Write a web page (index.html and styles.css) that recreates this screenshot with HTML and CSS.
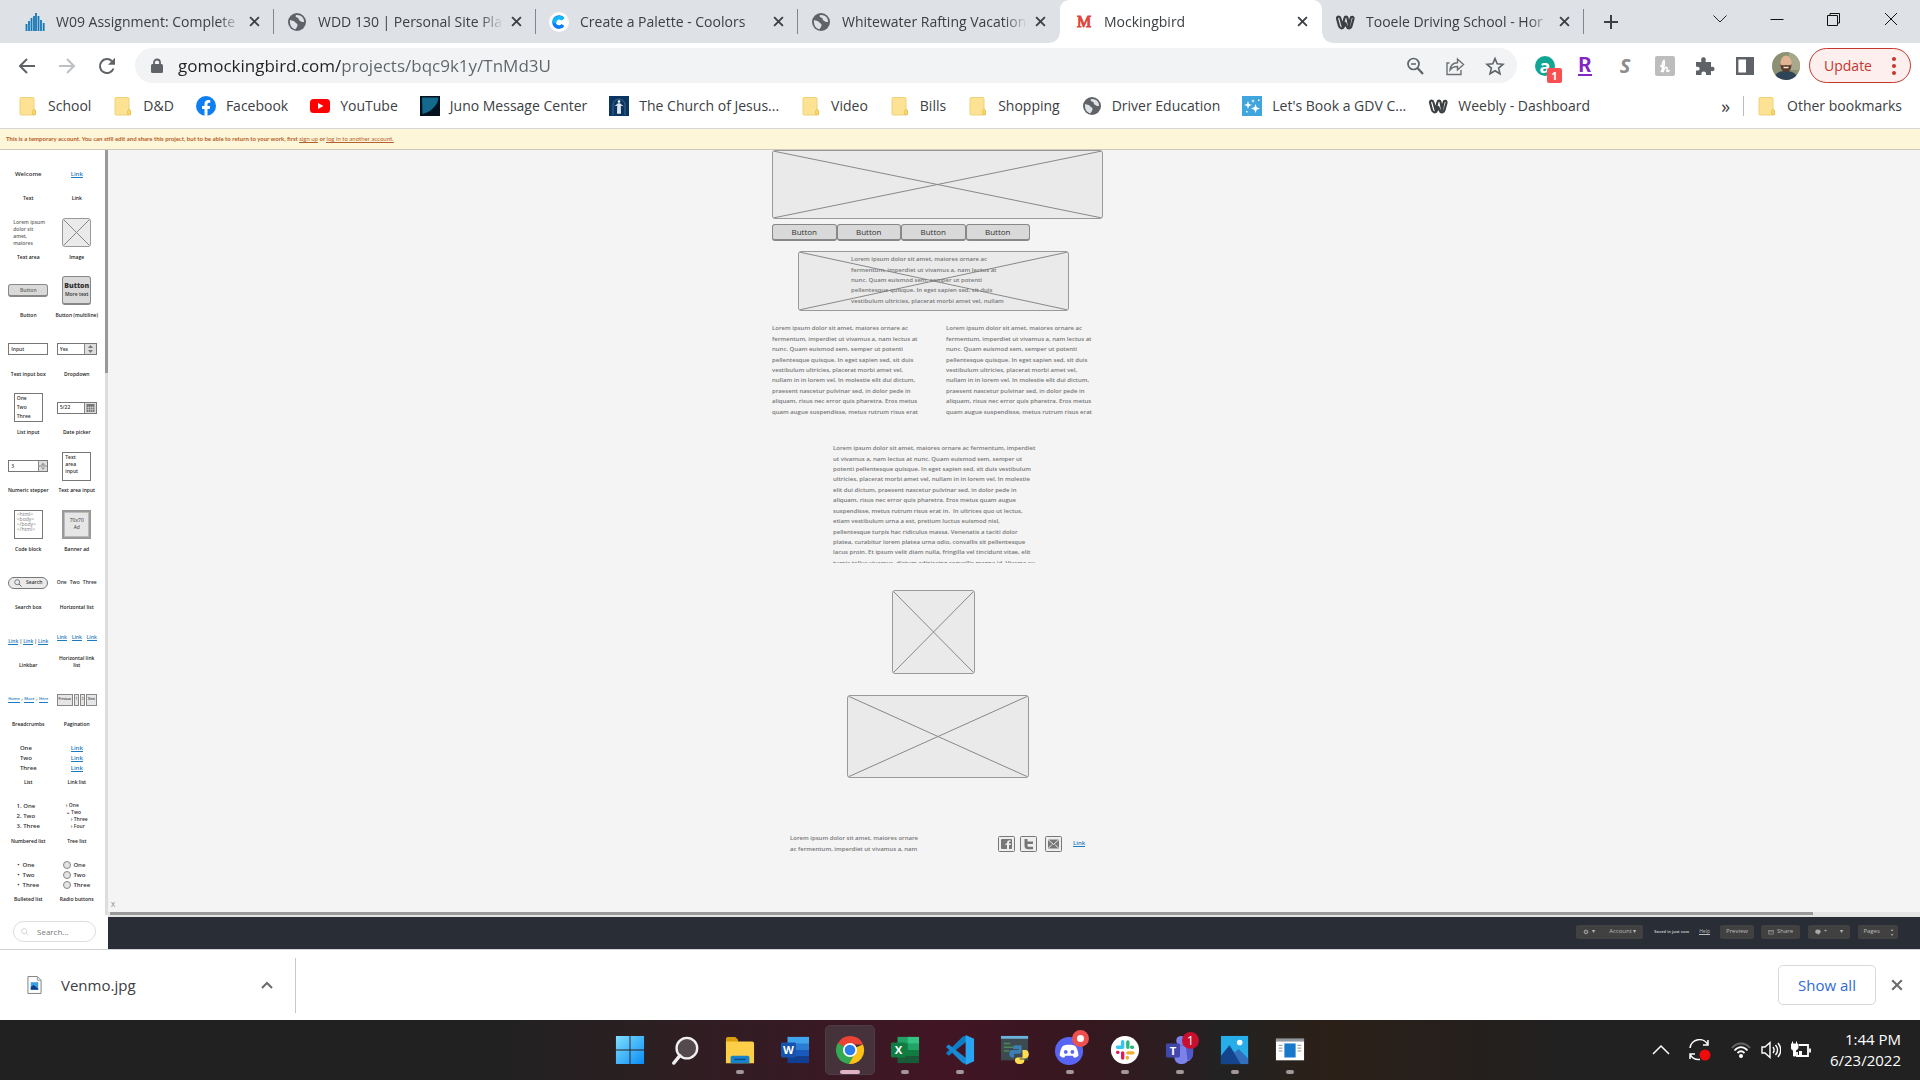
FILE: index.html
```html
<!DOCTYPE html>
<html lang="en">
<head>
<meta charset="utf-8">
<title>Mockingbird</title>
<link rel="stylesheet" href="styles.css">
</head>
<body>
<svg class="defs" aria-hidden="true">
  <symbol id="globe" viewBox="0 0 20 20"><circle cx="10" cy="10" r="9" fill="#5f6368"/><path d="M3 8c2 1 4 .5 5 2s3 1.500 2.500 3.500S9 16 8.500 17.300C5 16.500 2.500 13.500 3 8zM9 3c-1 2 .5 2.500 2 3s0 2 1.500 2.500 2 2 4.500 1.500C17.500 6 14 2.500 9 3z" fill="#dee1e6"/></symbol>
  <symbol id="folder" viewBox="0 0 20 20"><path d="M3 1.500h12a1 1 0 0 1 1 1V13l1.500 2v3a1 1 0 0 1-1 1H3a1 1 0 0 1-1-1V2.500a1 1 0 0 1 1-1z" fill="#fde293" stroke="#ecd27a"/><path d="M14.500 18.500V15l1.500-2 1.500 2v3.500z" fill="#fbd75f" stroke="#e3c05a" stroke-width=".7"/></symbol>
  <symbol id="weebly" viewBox="0 0 20 20"><path d="M2 6.500c0-2.500 3-2.500 3.500 0L7.500 14l2-8c.4-1.800 2.600-1.800 3 0l1.500 8 1.500-7.500c.5-2.300 3.400-2 3 .2L16.500 14c-.8 3-4 3-4.800.4L10.300 11 9 14.400c-.9 2.700-4.200 2.500-5-.4z" fill="none" stroke="#3c4043" stroke-width="2.200" stroke-linejoin="round"/></symbol>
  <symbol id="close" viewBox="0 0 10 10"><path d="M1 1l8 8M9 1L1 9" stroke="currentColor" stroke-width="1.700" fill="none"/></symbol>
  <symbol id="cross" viewBox="0 0 100 100" preserveAspectRatio="none"><path d="M0 0L100 100M100 0L0 100" stroke="#888" fill="none" vector-effect="non-scaling-stroke"/></symbol>
  <symbol id="gear" viewBox="0 0 10 10"><circle cx="5" cy="5" r="3" fill="none" stroke="#aaa" stroke-width="2" stroke-dasharray="1.600 .8"/><circle cx="5" cy="5" r="2.400" fill="none" stroke="#aaa"/></symbol>
</svg>

<header class="browser">
  <div class="tabstrip">
    <div class="tab">
      <svg class="icon20" viewBox="0 0 20 20"><path d="M1.500 19v-7M4 19V9M6.500 19V6M9 19V4M11 19V1M13.500 19V4M16 19V8M18.700 19v-8" stroke="#1778b8" stroke-width="1.800"/></svg>
      <span class="tab-title">W09 Assignment: Complete</span><button class="tab-close" aria-label="Close tab"><svg><use href="#close"/></svg></button>
    </div>
    <div class="tab">
      <svg class="icon20"><use href="#globe"/></svg>
      <span class="tab-title">WDD 130 | Personal Site Pla</span><button class="tab-close" aria-label="Close tab"><svg><use href="#close"/></svg></button>
    </div>
    <div class="tab">
      <svg class="icon20" viewBox="0 0 20 20"><circle cx="10" cy="10" r="10" fill="#fff"/><path d="M14 7.200A5 5 0 1 0 14 13" fill="none" stroke="#0a7cff" stroke-width="3.600"/><path d="M5.500 11A5 5 0 0 1 14 7.200" fill="none" stroke="#10b9f5" stroke-width="3.600"/></svg>
      <span class="tab-title">Create a Palette - Coolors</span><button class="tab-close" aria-label="Close tab"><svg><use href="#close"/></svg></button>
    </div>
    <div class="tab no-rule">
      <svg class="icon20"><use href="#globe"/></svg>
      <span class="tab-title">Whitewater Rafting Vacation</span><button class="tab-close" aria-label="Close tab"><svg><use href="#close"/></svg></button>
    </div>
    <div class="tab active">
      <span class="icon20 favicon-m">M</span>
      <span class="tab-title">Mockingbird</span><button class="tab-close" aria-label="Close tab"><svg><use href="#close"/></svg></button>
    </div>
    <div class="tab">
      <svg class="icon20"><use href="#weebly"/></svg>
      <span class="tab-title">Tooele Driving School - Hor</span><button class="tab-close" aria-label="Close tab"><svg><use href="#close"/></svg></button>
    </div>
    <button class="new-tab" aria-label="New tab"><svg viewBox="0 0 16 16"><path d="M8 1v14M1 8h14" stroke="#3c4043" stroke-width="2"/></svg></button>
    <div class="window-buttons">
      <button aria-label="Search tabs"><svg viewBox="0 0 16 16"><path d="M1.500 4.500L8 11l6.500-6.500" stroke="#222" fill="none"/></svg></button>
      <button aria-label="Minimize"><svg viewBox="0 0 16 16"><path d="M1.500 8.500h13" stroke="#111"/></svg></button>
      <button aria-label="Restore"><svg viewBox="0 0 16 16"><path d="M1.500 4.500h10v10h-10zM4 4.500v-2h9.500V12h-2" stroke="#111" fill="none"/></svg></button>
      <button aria-label="Close"><svg viewBox="0 0 16 16"><path d="M2 2l12 12M14 2L2 14" stroke="#111"/></svg></button>
    </div>
  </div>

  <div class="toolbar">
    <button class="nav-button" aria-label="Back"><svg viewBox="0 0 18 18"><path d="M17 9H2M9 2L2 9l7 7" fill="none" stroke="#5f6368" stroke-width="2"/></svg></button>
    <button class="nav-button" aria-label="Forward"><svg viewBox="0 0 18 18"><path d="M1 9h15M9 2l7 7-7 7" fill="none" stroke="#bdc1c6" stroke-width="2"/></svg></button>
    <button class="nav-button" aria-label="Reload"><svg viewBox="0 0 18 18"><path d="M15.500 11.500A7 7 0 1 1 14 4.200" fill="none" stroke="#5f6368" stroke-width="2"/><path d="M17 .8v7h-7z" fill="#5f6368"/></svg></button>
    <form class="address">
      <svg class="lock" viewBox="0 0 12 16"><path d="M3 7V4.500a3 3 0 0 1 6 0V7" fill="none" stroke="#5f6368" stroke-width="1.800"/><rect x="0" y="6" width="12" height="9" rx="1.500" fill="#5f6368"/></svg>
      <input class="url" type="text" aria-label="Address" value="gomockingbird.com/projects/bqc9k1y/TnMd3U">
      <svg viewBox="0 0 20 20"><circle cx="8.500" cy="8" r="5.500" fill="none" stroke="#5f6368" stroke-width="1.700"/><path d="M12.500 12L18 18" stroke="#5f6368" stroke-width="2.200"/><path d="M6 8h5" stroke="#5f6368" stroke-width="1.500"/></svg>
      <svg viewBox="0 0 20 20"><path d="M4.500 7H2v11.500h14V14" fill="none" stroke="#6c7074" stroke-width="1.400"/><path d="M5 14c.5-4.500 3-7 7.500-7.200V3l6 5.500-6 5.500v-3.500C9 10.400 7 11.500 5 14z" fill="none" stroke="#6c7074" stroke-width="1.400"/></svg>
      <svg viewBox="0 0 20 20"><path d="M10 2.500l2.200 5.300 5.800.5-4.400 3.800 1.400 5.600L10 14.700l-5 3 1.400-5.600L2 8.300l5.800-.5z" fill="none" stroke="#5f6368" stroke-width="1.600"/></svg>
    </form>
    <div class="extensions">
      <span class="ext ext-a">a<b class="ext-count">1</b></span>
      <span class="ext ext-r">R</span>
      <span class="ext ext-s">S</span>
      <span class="ext"><svg viewBox="0 0 20 20"><rect width="20" height="20" rx="2" fill="#bdbdbd"/><path d="M6 16c3-4 4-8 3-11.500C7 6 7 11 8 16c1-4 3.500-6 4-4 .3 1.500-.5 3.500.5 3.500s1.500-1 2-1.500M5 10h4" fill="none" stroke="#fff" stroke-width="1.600"/></svg></span>
      <span class="ext"><svg viewBox="0 0 20 20"><path d="M1 6h5.500C5.500 2.500 7 1.300 8.500 1.300S11.500 2.500 10.500 6H16v5c3-.8 3.500 1 3.500 2s-.8 2.600-3.500 2V19h-5c.5-2.800-.8-3.500-2.300-3.500S6 16.500 6.500 19H1v-4.500c3 .5 3.600-.8 3.600-2S3.500 10.300 1 10.800z" fill="#5f6368"/></svg></span>
      <span class="ext"><svg viewBox="0 0 20 20"><path d="M2.200 2.200h15.600v15.600H2.200z" fill="none" stroke="#5f6368" stroke-width="2.400"/><path d="M11 2h7v16h-7z" fill="#5f6368"/></svg></span>
    </div>
    <svg class="avatar" viewBox="0 0 28 28"><clipPath id="av"><circle cx="14" cy="14" r="14"/></clipPath><g clip-path="url(#av)"><path fill="#8d9173" d="M0 0h28v28H0z"/><path fill="#a8a88c" d="M17 0h11v18H17z"/><path fill="#2e4457" d="M2 28c1-8 6-9 12-9s11 2 12 9z"/><ellipse cx="14" cy="11" rx="5.500" ry="7.500" fill="#e3b493"/><path fill="#5b3d2c" d="M8.500 12c1 2 3 1 5.500 1s4.500 1 5.500-1c0 5-2 8-5.500 8s-5.500-3-5.500-8z"/><path d="M11.500 15.500h5" stroke="#f5e6da" stroke-width="1.300"/></g></svg>
    <button class="update">Update<svg viewBox="0 0 4 20"><circle cx="2" cy="3" r="2"/><circle cx="2" cy="10" r="2"/><circle cx="2" cy="17" r="2"/></svg></button>
  </div>

  <nav class="bookmarks">
    <a href="#"><svg><use href="#folder"/></svg>School</a>
    <a href="#"><svg><use href="#folder"/></svg>D&amp;D</a>
    <a href="#"><svg viewBox="0 0 20 20"><circle cx="10" cy="10" r="10" fill="#0d7ff2"/><path d="M8.500 20v-7H6v-3h2.500V8c0-2.600 1.500-4 3.800-4 1 0 2 .2 2 .2v2.500h-1.200c-1.200 0-1.600.8-1.600 1.500V10h2.700l-.5 3h-2.200v7z" fill="#fff"/></svg>Facebook</a>
    <a href="#"><svg viewBox="0 0 20 20"><rect y="3" width="20" height="14" rx="3.500" fill="#f00"/><path d="M8 7l5.500 3L8 13z" fill="#fff"/></svg>YouTube</a>
    <a href="#"><svg viewBox="0 0 20 20"><path fill="#04111f" d="M0 0h20v20H0z"/><path fill="#146a8c" d="M2 1.500h16.500C18 9 11 16 2.500 18z"/></svg>Juno Message Center</a>
    <a href="#"><svg viewBox="0 0 20 20"><path fill="#0b3561" d="M0 0h20v20H0z"/><path d="M4 19V9a6 6 0 0 1 12 0v10" fill="none" stroke="#41678d"/><circle cx="10" cy="5.500" r="1.300" fill="#fff"/><path d="M9 7.300h2l3.500 3-2.700-.5.200 8h-4l.2-8-2.700.5z" fill="#dde6ef"/></svg>The Church of Jesus...</a>
    <a href="#"><svg><use href="#folder"/></svg>Video</a>
    <a href="#"><svg><use href="#folder"/></svg>Bills</a>
    <a href="#"><svg><use href="#folder"/></svg>Shopping</a>
    <a href="#"><svg><use href="#globe"/></svg>Driver Education</a>
    <a href="#"><svg viewBox="0 0 20 20"><path fill="#3fa5dc" d="M0 0h20v20H0z"/><path d="M6 5l1 3 3 1-3 1-1 3-1-3-3-1 3-1zM13.500 8l1.200 3.300L18 12.500l-3.300 1.200L13.500 17l-1.200-3.300L9 12.500l3.300-1.200zM11 3l.5 1.500L13 5l-1.500.5L11 7l-.5-1.500L9 5l1.500-.5zM16 3.500h1.500V5H16zM4 15h1.500v1.500H4z" fill="#fff"/></svg>Let's Book a GDV C...</a>
    <a href="#"><svg><use href="#weebly"/></svg>Weebly - Dashboard</a>
    <button class="more" aria-label="More bookmarks">»</button>
    <a class="other" href="#"><svg><use href="#folder"/></svg>Other bookmarks</a>
  </nav>
</header>

<p class="notice">This is a temporary account. You can still edit and share this project, but to be able to return to your work, first <a href="#">sign up</a> or <a href="#">log in to another account.</a></p>

<main class="editor">
  <aside class="sidebar">
    <div class="palette-wrap">
      <div class="palette">
        <figure><div class="art t6">Welcome</div><figcaption>Text</figcaption></figure>
        <figure><div class="art t6"><a class="wlink" href="#">Link</a></div><figcaption>Link</figcaption></figure>
        <figure><div class="art"><p class="mini-copy">Lorem ipsum<br>dolor sit<br>amet,<br>maiores</p></div><figcaption>Text area</figcaption></figure>
        <figure><div class="art"><div class="wire sq"><svg><use href="#cross"/></svg></div></div><figcaption>Image</figcaption></figure>
        <figure><div class="art"><button class="wbutton mini">Button</button></div><figcaption>Button</figcaption></figure>
        <figure><div class="art"><button class="wbutton sq multi"><b>Button</b><span>More text</span></button></div><figcaption>Button (multiline)</figcaption></figure>
        <figure><div class="art"><input class="field" id="f-text" value="Input"></div><figcaption><label for="f-text">Text input box</label></figcaption></figure>
        <figure><div class="art"><div class="field combo"><select id="f-drop"><option>Yes</option></select><svg viewBox="0 0 11 10"><path d="M3 4l2.500-3L8 4zM3 6l2.500 3L8 6z" fill="#777"/></svg></div></div><figcaption><label for="f-drop">Dropdown</label></figcaption></figure>
        <figure><div class="art"><div class="box sq roomy">One<br>Two<br>Three</div></div><figcaption>List input</figcaption></figure>
        <figure><div class="art"><div class="field combo"><input id="f-date" value="5/22"><svg viewBox="0 0 11 10"><path d="M1.500 1h8v8h-8z" fill="#777"/><path d="M1.500 4.500h8M1.500 6.500h8M3.500 3v6M5.500 3v6M7.500 3v6" stroke="#ddd" stroke-width=".5"/></svg></div></div><figcaption><label for="f-date">Date picker</label></figcaption></figure>
        <figure><div class="art"><div class="field combo"><input id="f-num" value="3"><svg class="stepper" viewBox="0 0 8 10"><path d="M2 4l2-2.500L6 4zM2 6.500L4 9l2-2.500z" fill="#999"/><path d="M0 5h8" stroke="#888"/></svg></div></div><figcaption><label for="f-num">Numeric stepper</label></figcaption></figure>
        <figure><div class="art"><textarea class="box sq" id="f-area">Text
area
input</textarea></div><figcaption><label for="f-area">Text area input</label></figcaption></figure>
        <figure><div class="art"><pre class="box sq code">&lt;html&gt;
&lt;body&gt;
&lt;/body&gt;
&lt;/html&gt;</pre></div><figcaption>Code block</figcaption></figure>
        <figure><div class="art"><div class="box sq banner">70x70<br>Ad</div></div><figcaption>Banner ad</figcaption></figure>
        <figure><div class="art"><button class="pill"><svg viewBox="0 0 8 8"><circle cx="3.200" cy="3.200" r="2.500" fill="none" stroke="#666" stroke-width=".8"/><path d="M5 5l2.500 2.500" stroke="#666"/></svg>Search</button></div><figcaption>Search box</figcaption></figure>
        <figure><div class="art"><div class="spread"><span>One</span><span>Two</span><span>Three</span></div></div><figcaption>Horizontal list</figcaption></figure>
        <figure><div class="art"><div class="spread"><a class="wlink" href="#">Link</a>|<a class="wlink" href="#">Link</a>|<a class="wlink" href="#">Link</a></div></div><figcaption>Linkbar</figcaption></figure>
        <figure><div class="art"><div class="spread"><a class="wlink" href="#">Link</a><a class="wlink" href="#">Link</a><a class="wlink" href="#">Link</a></div></div><figcaption>Horizontal link<br>list</figcaption></figure>
        <figure><div class="art"><div class="spread t4"><a class="wlink" href="#">Home</a>&gt;<a class="wlink" href="#">More</a>&gt;<a class="wlink" href="#">Here</a></div></div><figcaption>Breadcrumbs</figcaption></figure>
        <figure><div class="art"><div class="pages"><button>Previous</button><button>1</button><button>2</button><button>Next</button></div></div><figcaption>Pagination</figcaption></figure>
        <figure><div class="art t6 list"><p>One<br>Two<br>Three</p></div><figcaption>List</figcaption></figure>
        <figure><div class="art t6 list"><p><a class="wlink" href="#">Link</a><br><a class="wlink" href="#">Link</a><br><a class="wlink" href="#">Link</a></p></div><figcaption>Link list</figcaption></figure>
        <figure><div class="art t6 list"><p>1. One<br>2. Two<br>3. Three</p></div><figcaption>Numbered list</figcaption></figure>
        <figure><div class="art"><ul class="tree"><li>› One</li><li>⌄ Two<ul><li>› Three</li><li>› Four</li></ul></li></ul></div><figcaption>Tree list</figcaption></figure>
        <figure><div class="art t6 list"><p>•&nbsp; One<br>•&nbsp; Two<br>•&nbsp; Three</p></div><figcaption>Bulleted list</figcaption></figure>
        <figure><div class="art t6 list"><div class="radios"><label><input type="radio" name="r">One</label><label><input type="radio" name="r">Two</label><label><input type="radio" name="r">Three</label></div></div><figcaption>Radio buttons</figcaption></figure>
      </div>
      <div class="vscroll"><div class="vthumb"></div></div>
    </div>
    <label class="search"><svg viewBox="0 0 8 8"><circle cx="3.200" cy="3.200" r="2.600" fill="none" stroke="#ccc" stroke-width=".8"/><path d="M5.200 5.200l2.300 2.300" stroke="#ccc" stroke-width=".8"/></svg><input type="text" aria-label="Search widgets" placeholder="Search..."></label>
  </aside>

  <section class="workspace">
    <div class="canvas">
      <div class="mock">
        <div class="wire hero"><svg><use href="#cross"/></svg></div>
        <div class="mock-nav"><button class="wbutton">Button</button><button class="wbutton">Button</button><button class="wbutton">Button</button><button class="wbutton">Button</button></div>
        <div class="wire feature"><svg><use href="#cross"/></svg>
          <p class="copy lines-5"><span>Lorem ipsum dolor sit amet, maiores ornare ac</span><span>fermentum, imperdiet ut vivamus a, nam lectus at</span><span>nunc. Quam euismod sem, semper ut potenti</span><span>pellentesque quisque. In eget sapien sed, sit duis</span><span>vestibulum ultricies, placerat morbi amet vel, nullam</span></p>
        </div>
        <div class="columns">
          <p class="copy lines-9"><span>Lorem ipsum dolor sit amet, maiores ornare ac</span><span>fermentum, imperdiet ut vivamus a, nam lectus at</span><span>nunc. Quam euismod sem, semper ut potenti</span><span>pellentesque quisque. In eget sapien sed, sit duis</span><span>vestibulum ultricies, placerat morbi amet vel,</span><span>nullam in in lorem vel. In molestie elit dui dictum,</span><span>praesent nascetur pulvinar sed, in dolor pede in</span><span>aliquam, risus nec error quis pharetra. Eros metus</span><span>quam augue suspendisse, metus rutrum risus erat</span></p>
          <p class="copy lines-9"><span>Lorem ipsum dolor sit amet, maiores ornare ac</span><span>fermentum, imperdiet ut vivamus a, nam lectus at</span><span>nunc. Quam euismod sem, semper ut potenti</span><span>pellentesque quisque. In eget sapien sed, sit duis</span><span>vestibulum ultricies, placerat morbi amet vel,</span><span>nullam in in lorem vel. In molestie elit dui dictum,</span><span>praesent nascetur pulvinar sed, in dolor pede in</span><span>aliquam, risus nec error quis pharetra. Eros metus</span><span>quam augue suspendisse, metus rutrum risus erat</span></p>
        </div>
        <div class="clip"><p class="copy lines-12"><span>Lorem ipsum dolor sit amet, maiores ornare ac fermentum, imperdiet</span><span>ut vivamus a, nam lectus at nunc. Quam euismod sem, semper ut</span><span>potenti pellentesque quisque. In eget sapien sed, sit duis vestibulum</span><span>ultricies, placerat morbi amet vel, nullam in in lorem vel. In molestie</span><span>elit dui dictum, praesent nascetur pulvinar sed, in dolor pede in</span><span>aliquam, risus nec error quis pharetra. Eros metus quam augue</span><span>suspendisse, metus rutrum risus erat in.&nbsp; In ultrices quo ut lectus,</span><span>etiam vestibulum urna a est, pretium luctus euismod nisl,</span><span>pellentesque turpis hac ridiculus massa. Venenatis a taciti dolor</span><span>platea, curabitur lorem platea urna odio, convallis sit pellentesque</span><span>lacus proin. Et ipsum velit diam nulla, fringilla vel tincidunt vitae, elit</span><span>turpis tellus vivamus, dictum adipiscing convallis magna id. Viverra eu</span></p></div>
        <div class="wire portrait"><svg><use href="#cross"/></svg></div>
        <div class="wire wide"><svg><use href="#cross"/></svg></div>
        <div class="mock-footer">
          <p class="copy lines-2"><span>Lorem ipsum dolor sit amet, maiores ornare</span><span>ac fermentum, imperdiet ut vivamus a, nam</span></p>
          <svg class="social" viewBox="0 0 17 16"><rect x=".5" y=".5" width="16" height="15" rx="1" fill="#eee" stroke="#777"/><rect x="3" y="3" width="11" height="10" rx="1" fill="#777"/><path d="M9 13V9H7.500V7.500H9C9 5 10 4 12.500 4.300v1.500C11 5.700 11 6 11 7.500h1.800V9H11v4z" fill="#eee"/></svg>
          <svg class="social" viewBox="0 0 17 16"><rect x=".5" y=".5" width="16" height="15" rx="1" fill="#eee" stroke="#777"/><path d="M4.500 3h3v2.500H13V8H7.500v1.500c0 1 .5 1.300 1.500 1.300h4v2.400H8.500c-2.500 0-4-1-4-3.500z" fill="#777"/></svg>
          <svg class="social mail" viewBox="0 0 17 16"><rect x=".5" y=".5" width="16" height="15" rx="1" fill="#eee" stroke="#777"/><rect x="3" y="3.500" width="11" height="9" fill="#777"/><path d="M3 3.500l5.500 5 5.500-5M3 12.500l4-4M14 12.500l-4-4" stroke="#eee" fill="none"/></svg>
          <a class="wlink t6" href="#">Link</a>
        </div>
      </div>
      <button class="hide" aria-label="Hide">X</button>
    </div>
    <div class="hscroll"><div class="hthumb"></div></div>
    <footer class="actions">
      <div class="group account"><button aria-label="Settings"><svg><use href="#gear"/></svg>▾</button><button>Account ▾</button></div>
      <span class="saved">Saved in just now</span>
      <a href="#">Help</a>
      <button class="group preview">Preview</button>
      <button class="group share"><svg viewBox="0 0 10 10"><path d="M1 2.500h8v6H1zM1 2.500l4 3 4-3" fill="none" stroke="#aaa"/></svg>Share</button>
      <div class="group comments"><button aria-label="Comments"><svg viewBox="0 0 10 10"><ellipse cx="5" cy="4.500" rx="4.500" ry="3.500" fill="#aaa"/><path d="M5 7v3l3-3z" fill="#aaa"/></svg>+</button><button aria-label="Comment menu">▾</button></div>
      <div class="group pager"><button>Pages</button><button class="stack" aria-label="Change page"><span>▴</span><span>▾</span></button></div>
    </footer>
  </section>
</main>

<section class="downloads">
  <a class="file" href="#"><svg viewBox="0 0 16 20"><path d="M1 1h10l4 4v14H1z" fill="#fff" stroke="#777"/><path d="M11 1v4h4" fill="none" stroke="#999"/><path d="M4 7h8v8H4z" fill="#3aa0e0"/><path d="M4 12l3-2 5 4v1H4z" fill="#0b3f8a"/></svg>Venmo.jpg</a>
  <button class="file-menu" aria-label="File menu"><svg viewBox="0 0 12 8"><path d="M1 7l5-5 5 5" fill="none" stroke="#6b6b6b" stroke-width="2"/></svg></button>
  <button class="show-all">Show all</button>
  <button class="close-bar" aria-label="Close downloads"><svg><use href="#close"/></svg></button>
</section>

<footer class="taskbar">
  <nav class="apps">
    <button aria-label="Start"><svg viewBox="0 0 32 32"><linearGradient id="w" x2="1" y2="1"><stop stop-color="#7fe0ff"/><stop offset="1" stop-color="#0a8cf5"/></linearGradient><path d="M1 1h14.500v14.500H1zM16.500 1H31v14.500H16.500zM1 16.500h14.500V31H1zM16.500 16.500H31V31H16.500z" fill="url(#w)"/></svg></button>
    <button aria-label="Search"><svg viewBox="0 0 32 32"><circle cx="18" cy="14" r="11" fill="#54494d" stroke="#f1f1f1" stroke-width="2.500"/><path d="M10.500 22L4 30" stroke="#eee" stroke-width="3.500" stroke-linecap="round"/></svg></button>
    <button class="on" aria-label="File Explorer"><svg viewBox="0 0 32 32"><path d="M1 4a2 2 0 0 1 2-2h8l3 3v5H1z" fill="#d99e0b"/><path d="M1 7h28a2 2 0 0 1 2 2v21H1z" fill="#fdce47"/><path d="M6 30v-6a2 2 0 0 1 2-2h16a2 2 0 0 1 2 2v6z" fill="#1683cc"/><path d="M10 26h12" stroke="#0a4d86" stroke-width="1.500"/></svg></button>
    <button aria-label="Word"><svg viewBox="0 0 32 32"><path fill="#41a5ee" d="M8 2h23v8H8z"/><path fill="#2b7cd3" d="M8 9h23v7H8z"/><path fill="#185abd" d="M8 16h23v7H8z"/><path fill="#103f91" d="M8 23h23v7H8z"/><rect x="1" y="8" width="16" height="16" rx="1.500" fill="#1653ae"/><text x="9" y="20.500">W</text></svg></button>
    <button class="on current" aria-label="Chrome"><svg viewBox="0 0 32 32"><path d="M16 16L3 9A15 15 0 0 1 30 10H16z" fill="#ea4335"/><path d="M16 16l13.800-6A15 15 0 0 1 15 31z" fill="#fbc116"/><path d="M16 16L3 8.500A15 15 0 0 0 15 31l6-11z" fill="#34a853"/><circle cx="16" cy="16" r="7.500" fill="#fff"/><circle cx="16" cy="16" r="5.700" fill="#2a7de9"/></svg></button>
    <button class="on" aria-label="Excel"><svg viewBox="0 0 32 32"><path fill="#21a366" d="M8 2h12v8H8z"/><path fill="#33c481" d="M19 2h12v8H19z"/><path fill="#107c41" d="M8 9h12v14H8z"/><path fill="#21a366" d="M19 9h12v7H19z"/><path fill="#107c41" d="M19 16h12v7H19z"/><path fill="#185c37" d="M8 23h23v7H8z"/><rect x="1" y="8" width="16" height="16" rx="1.500" fill="#107c41"/><text x="9" y="20.500">X</text></svg></button>
    <button class="on" aria-label="Visual Studio Code"><svg viewBox="0 0 32 32"><path d="M23 7L4 22l-3-2.500L19 1.500 23 1z" fill="#0f7dc6"/><path d="M23 25L4 10l-3 2.500L19 30l4 1z" fill="#1889d2"/><path d="M22 0l9 4v24l-9 4z" fill="#29a4f0"/></svg></button>
    <button aria-label="Python"><svg viewBox="0 0 32 32"><path fill="#3d4a50" d="M1 1h29v26H1z"/><path fill="#6cb3dc" d="M1 1h29v3H1z"/><path d="M4 9h7M4 13h10M4 17h6" stroke="#4c8a58" stroke-width="1.500"/><path d="M16 11h7v6c0 2-1 3-3 3h-5v4h-2c-4 0-4-8 0-8h7v-1h-6c0-2 0-4 2-4z" fill="#3d7eb5"/><path d="M24 16h3c5 0 5 9 0 9h-6v1h5c0 3-1 5-5 5s-5-2-5-4 1-3 3-3h5z" fill="#ffdc52"/></svg></button>
    <button class="on" aria-label="Discord"><svg viewBox="0 0 32 32"><circle cx="15" cy="17" r="15" fill="#5865f2"/><path d="M8 12c4-2 10-2 14 0 2 3 3 7 3 10-2 2-4 2-5 2l-1-2h-8l-1 2c-1 0-3 0-5-2 0-3 1-7 3-10z" fill="#fff"/><circle cx="11.500" cy="18" r="2" fill="#5865f2"/><circle cx="18.500" cy="18" r="2" fill="#5865f2"/></svg><i class="badge dot"></i></button>
    <button class="on" aria-label="Slack"><svg viewBox="0 0 32 32"><circle cx="16" cy="16" r="15" fill="#fff"/><g stroke-width="3.600" stroke-linecap="round"><path d="M13.500 7v6M8 13h5" stroke="#36c5f0"/><path d="M19 7.500V13M24 13h-1" stroke="#2eb67d"/><path d="M19 19h5.500M18.500 24v.5" stroke="#ecb22e"/><path d="M13.500 19v5.500M8 18.500h.5" stroke="#e01e5a"/></g></svg></button>
    <button class="on" aria-label="Teams"><svg viewBox="0 0 32 32"><circle cx="17" cy="6" r="5" fill="#7b83eb"/><path d="M11 11h19v8c0 6-4 9-6 9-2 3-6 3-8 3-5-1-6-5-6-8z" fill="#7b83eb"/><path d="M22 11h8v8c0 5-3 8-6 8z" fill="#5059c9"/><rect x="1" y="9" width="15" height="15" rx="1.500" fill="#4248ab"/><text x="8.500" y="21">T</text></svg><i class="badge">1</i></button>
    <button class="on" aria-label="Photos"><svg viewBox="0 0 32 32"><path fill="#27aee9" d="M1 1h29v30H1z"/><path d="M1 22l9-11 13 20H1z" fill="#14448b"/><path d="M15 19l5-4 10 10v6h-8z" fill="#3270bd"/><circle cx="21" cy="8" r="3" fill="#f2fbff"/></svg></button>
    <button class="on" aria-label="Reader"><svg viewBox="0 0 32 32"><path fill="#fff" d="M1 4h30v23H1z"/><path fill="#90989e" d="M1 4h30v3H1z"/><path d="M4 11h4M4 14h4M4 17h4M24 11h4M24 14h4M24 17h4" stroke="#888"/><rect x="10" y="9" width="12" height="15" fill="#1878c9"/></svg></button>
  </nav>
  <div class="tray">
    <svg viewBox="0 0 20 20"><path d="M2 14l8-8 8 8" fill="none" stroke="#fff" stroke-width="1.500"/></svg>
    <svg class="sync" viewBox="0 0 22 22"><path d="M1 9A9.500 9.500 0 0 1 19 6M19 1v5h-5M1 20v-5h5M1 15c1.500 3.500 5 6 10 5.500" fill="none" stroke="#fff" stroke-width="1.500"/><circle cx="16" cy="16" r="5.500" fill="#f00b0b"/></svg>
    <svg viewBox="0 0 20 20"><path d="M1 8c5-6 13-6 18 0" fill="none" stroke="#666" stroke-width="1.800"/><path d="M3.500 10.500c4-4.500 9-4.500 13 0M6.500 13c2.500-2.500 4.500-2.500 7 0" fill="none" stroke="#fff" stroke-width="1.800"/><circle cx="10" cy="16" r="2" fill="#fff"/></svg>
    <svg viewBox="0 0 20 20"><path d="M1 7h3l5-4.500v15L4 13H1zM12 7c1.500 2 1.500 4 0 6M14.500 5c2.500 3 2.500 7 0 10M17 3c3.500 4.500 3.500 9.500 0 14" fill="none" stroke="#fff" stroke-width="1.400"/></svg>
    <svg viewBox="0 0 20 20"><path d="M8 5h9v11H6v-4M19 8.500v4" fill="none" stroke="#fff" stroke-width="1.800"/><path d="M0 4h7v3c0 2-1 3-2.500 3v6h-2v-6C1 10 0 9 0 7zM1.500 1.500V4M5.500 1.500V4" fill="#fff" stroke="#fff"/><path d="M8 11h3v4H8z" fill="#fff"/></svg>
    <time datetime="2022-06-23T13:44">1:44 PM<br>6/23/2022</time>
  </div>
</footer>
</body>
</html>
```
FILE: styles.css
```css
* { box-sizing: border-box; }
body {
  margin: 0;
  min-height: 100vh;
  display: flex;
  flex-direction: column;
  overflow: hidden;
  font: 14px/20px "Open Sans", "Noto Sans", sans-serif;
  color: #3c4043;
  background: #fff;
}
button, input, select, textarea { font: inherit; color: inherit; border: 0; padding: 0; margin: 0; background: none; outline: 0; min-width: 0; }
button { display: flex; align-items: center; justify-content: center; }
figure, p, ul, pre { margin: 0; padding: 0; }
ul { list-style: none; }
a { color: inherit; text-decoration: none; }
svg { display: block; flex: none; }
.defs { position: absolute; width: 0; height: 0; }
.icon20 { width: 20px; height: 20px; flex: none; }

/* Tab strip */
.tabstrip { display: flex; height: 43px; padding-left: 12px; background: #dee1e6; }
.tab { position: relative; flex: 0 1 262px; min-width: 0; display: flex; align-items: center; padding: 0 14px 0 13px; }
.tab::after { content: ""; position: absolute; right: 0; top: 9px; width: 1px; height: 25px; background: #80868b; }
.tab.no-rule::after { display: none; }
.tab-title { flex: 1; min-width: 0; margin: 0 3px 0 11px; overflow: hidden; white-space: nowrap; mask-image: linear-gradient(to right, #000 86%, transparent 98%); }
.tab-close { width: 12px; height: 20px; }
.tab-close svg { width: 11px; height: 11px; }
.tab.active { background: #fff; border-radius: 9px 9px 0 0; }
.tab.active::before, .tab.active::after { content: ""; position: absolute; top: auto; bottom: 0; width: 10px; height: 10px; }
.tab.active::before { left: -10px; background: radial-gradient(circle at 0 0, #dee1e6 9px, #fff 10px); }
.tab.active::after { right: -10px; background: radial-gradient(circle at 100% 0, #dee1e6 9px, #fff 10px); }
.favicon-m { padding-left: 4px; font: 16px/20px "Liberation Serif", serif; -webkit-text-stroke: 1px #e0453c; color: #e0453c; }
.new-tab { width: 54px; }
.new-tab svg, .window-buttons svg { width: 16px; height: 16px; }
.window-buttons { display: flex; margin-left: auto; height: 37px; padding-right: 1px; }
.window-buttons button { width: 57px; }

/* Toolbar */
.toolbar { display: flex; align-items: center; height: 45px; padding: 0 9px 0 7px; }
.nav-button { width: 40px; height: 36px; }
.nav-button svg { width: 18px; height: 18px; }
.address { flex: 1; display: flex; align-items: center; gap: 20px; height: 35px; margin: 0 8px; padding: 0 12px 0 16px; border-radius: 18px; background: #f1f3f4; }
.address svg { width: 20px; height: 20px; }
.address .lock { width: 12px; height: 16px; }
.url { flex: 1; margin-left: -5px; font-size: 17px; line-height: 24px; background: linear-gradient(to right, #202124 164px, #5f6368 164px); background-clip: text; -webkit-text-fill-color: transparent; }
.extensions { display: flex; gap: 20px; margin-left: 10px; }
.ext { position: relative; display: flex; align-items: center; justify-content: center; width: 20px; height: 20px; }
.ext svg { width: 20px; height: 20px; }
.ext-a { border-radius: 50%; background: #11a594; color: #fff; font: bold 18px/18px "Open Sans", sans-serif; }
.ext-count { position: absolute; left: 12px; top: 12px; width: 15px; height: 15px; border-radius: 2px; background: #fa4f51; font: bold 11px/15px "Open Sans", sans-serif; text-align: center; }
.ext-r { width: 14px; margin: 0 3px; color: #8226c4; border-bottom: 2px solid #8226c4; font: bold 20px/18px Roboto, sans-serif; }
.ext-s { color: #8c8c8c; font: italic bold 20px/20px "Open Sans", sans-serif; }
.avatar { width: 28px; height: 28px; margin: 0 9px 0 17px; }
.update { width: 102px; height: 35px; gap: 20px; border: 1px solid #c5372c; border-radius: 18px; background: #fcefee; color: #c5372c; }
.update svg { width: 4px; height: 20px; fill: #c5372c; }

/* Bookmarks */
.bookmarks { display: flex; align-items: center; gap: 22px; height: 41px; padding: 0 18px 4px; border-bottom: 1px solid #d5d7db; white-space: nowrap; }
.bookmarks a { display: flex; align-items: center; gap: 10px; }
.bookmarks svg { width: 20px; height: 20px; }
.more { margin-left: auto; font-size: 18px; }
.bookmarks .other { margin-left: -9px; padding-left: 13px; border-left: 1px solid #b9bcc1; }

.notice { height: 21px; padding: 0 6px; border-bottom: 1px solid #cdc9b8; background: #fef6d8; color: #b5602c; font: bold 6px/20px Lato, sans-serif; white-space: nowrap; }
.notice a { font-weight: normal; border-bottom: 1px solid #b5602c; }

/* Editor */
.editor { flex: 1; display: flex; min-height: 0; border-bottom: 1px solid #d0d2d5; font-size: 5px; line-height: 7px; font-weight: 600; color: #333; }
.sidebar { width: 108px; flex: none; display: flex; flex-direction: column; background: #fff; }
.palette-wrap { flex: 1; display: flex; }
.palette { flex: 1; display: grid; grid-template-columns: 1fr 1fr; grid-auto-rows: 1fr; padding: 0 4px 6px; }
.palette figure { display: flex; flex-direction: column; min-width: 0; min-height: 0; padding-bottom: 6px; }
.palette figcaption { display: flex; justify-content: center; text-align: center; white-space: nowrap; color: #222; }
.art { flex: 1; min-height: 0; display: flex; align-items: center; justify-content: center; padding-top: 3px; white-space: nowrap; }
.t6 { font-size: 6px; }
.t4 { font-size: 4px; }
.list { line-height: 10px; }
.sq { width: 29px; height: 29px; }
.mini-copy { width: 30px; color: #666; }
.wlink { color: #1b7bc0; border-bottom: 1px solid #1b7bc0; line-height: 6px; display: inline-block; }
.wire { position: relative; border: 1px solid #999; border-radius: 3px; background: #eaeaea; overflow: hidden; }
.wire > svg { position: absolute; inset: 0; width: 100%; height: 100%; }
.wbutton { border: 1px solid #888; border-bottom-width: 2px; border-radius: 3px; background: #d9d9d9; color: #333; }
.wbutton.mini { width: 40px; height: 13px; color: #666; }
.wbutton.multi { flex-direction: column; gap: 2px; font-size: 5px; }
.wbutton.multi b { font-size: 7px; }
.field { width: 40px; height: 12px; border: 1px solid #777; padding-left: 2px; }
.combo { display: flex; }
.combo input, .combo select { flex: 1; appearance: none; }
.combo svg { width: 12px; height: 10px; border-left: 1px solid #888; background: #ddd; }
.combo .stepper { width: 9px; }
.box { border: 1px solid #777; padding: 1px 2px; overflow: hidden; resize: none; }
.roomy { line-height: 9px; padding-top: 0; }
.code { font: 5px/5px "Open Sans", sans-serif; color: #777; }
.banner { border: 2px solid #999; outline: 1px solid #bbb; outline-offset: -3px; background: #e6e6e6; text-align: center; padding-top: 5px; font-weight: 400; }
.pill { width: 40px; height: 12px; gap: 4px; border: 1px solid #777; border-radius: 6px; background: #eaeaea; }
.pill svg { width: 8px; height: 8px; }
.spread { width: 40px; display: flex; justify-content: space-between; align-items: center; }
.pages { display: flex; gap: 1px; width: 40px; font-size: 3px; }
.pages button { flex: 1 1 auto; height: 12px; border: 1px solid #888; background: #e6e6e6; }
.tree { line-height: 7px; }
.tree ul { padding-left: 5px; }
.radios label { display: flex; align-items: center; gap: 2px; }
.radios input { width: 8px; height: 8px; appearance: none; border: 1px solid #888; border-radius: 50%; background: #e4e4e4; }
.vscroll { width: 3px; background: #ddd; }
.vthumb { height: 223px; background: #999; }
.search { display: flex; align-items: center; gap: 8px; height: 21px; margin: 6px 12px 7px 13px; padding: 0 7px; border: 1px solid #ddd; border-radius: 11px; font-size: 8px; font-weight: 400; }
.search svg { width: 8px; height: 8px; }
.search input { width: 45px; }
.search input::placeholder { color: #777; }

.workspace { flex: 1; min-width: 0; display: flex; flex-direction: column; background: #f4f4f4; }
.canvas { position: relative; flex: 1; padding-right: 153px; }
.mock { width: 331px; margin: 0 auto; }
.hero { height: 69px; }
.mock-nav { display: flex; width: 258px; margin: 5px 0 10px; font-size: 8px; }
.mock-nav .wbutton { flex: 1; height: 17px; padding-bottom: 2px; font-weight: 500; }
.feature { width: 271px; height: 60px; margin-left: 26px; padding: 2px 0 0 52px; }
.copy { position: relative; display: grid; grid-auto-rows: 1fr; align-items: center; font-size: 6px; line-height: 10px; color: #777; white-space: nowrap; }
.lines-2 { height: 21px; }
.lines-5 { height: 52px; }
.lines-9 { height: 94px; }
.lines-12 { height: 125px; }
.columns { display: grid; grid-template-columns: 157px 157px; gap: 17px; margin: 12px 0 26px; }
.clip { width: 218px; height: 120px; margin-left: 61px; overflow: hidden; }
.portrait { width: 83px; height: 84px; margin: 27px 0 21px 120px; }
.wide { width: 182px; height: 83px; margin-left: 75px; }
.mock-footer { display: flex; align-items: center; gap: 5px; margin: 55px 0 0 18px; }
.mock-footer .copy { width: 203px; }
.social { width: 17px; height: 16px; }
.mail { margin: 0 6px 0 3px; }
.hide { position: absolute; left: 3px; bottom: 4px; color: #777; font-size: 7px; font-weight: 400; }
.hscroll { height: 5px; background: #e4e4e4; }
.hthumb { width: 94%; height: 3px; margin-left: 2px; background: #999; }
.actions { display: flex; align-items: center; justify-content: flex-end; height: 32px; padding: 0 22px 3px 0; background: #292e36; color: #bbb; font-size: 6px; font-weight: 400; }
.actions svg { width: 6px; height: 6px; }
.actions a { font-size: 5px; border-bottom: 1px solid #bbb; margin: 0 10px; line-height: 6px; }
.saved { font-size: 4px; font-weight: 700; }
.group { display: flex; align-items: center; justify-content: space-around; height: 14px; border-radius: 2px; background: #414141; }
.group button { gap: 3px; }
.account { width: 67px; margin-right: 11px; }
.preview { width: 34px; }
.share { width: 39px; margin-left: 7px; gap: 3px; justify-content: center; }
.comments { width: 42px; margin: 0 8px; }
.pager { width: 40px; }
.group .stack { flex-direction: column; gap: 0; line-height: 5px; font-size: 4px; }

/* Download shelf */
.downloads { display: flex; align-items: center; height: 70px; padding: 0 17px 0 27px; font-size: 15px; }
.file { display: flex; align-items: center; gap: 19px; width: 233px; }
.file svg { width: 15px; height: 20px; }
.file-menu { width: 36px; height: 55px; padding-right: 22px; border-right: 1px solid #c8c8c8; justify-content: flex-end; }
.file-menu svg { width: 12px; height: 8px; }
.show-all { width: 98px; height: 40px; margin-left: auto; border: 1px solid #d5d8dc; border-radius: 5px; color: #2f6bd8; }
.close-bar { width: 12px; margin-left: 15px; color: #6b6b6b; }
.close-bar svg { width: 12px; height: 12px; }

/* Taskbar */
.taskbar { position: relative; display: flex; align-items: center; justify-content: center; height: 60px; background: linear-gradient(to right, #212121 26%, #2c1f22 34%, #421525 49%, #35181f 57%, #222 64%, #2c2018 69%, #241f1d 77%, #212121 82%); color: #fff; }
.apps { display: flex; gap: 5px; }
.apps button { position: relative; width: 50px; height: 50px; border-radius: 5px; }
.apps svg { width: 30px; height: 30px; }
.apps text { fill: #fff; font: bold 12px "Open Sans", sans-serif; text-anchor: middle; }
.apps .on::after { content: ""; position: absolute; left: 21px; bottom: 1px; width: 8px; height: 4px; border-radius: 2px; background: #a3979b; }
.apps .current { background: #46323a; border: 1px solid #503c44; }
.apps .current::after { left: 14px; bottom: 0; width: 20px; background: #dfb3c5; }
.badge { position: absolute; left: 27px; top: 7px; width: 17px; height: 17px; border-radius: 50%; background: #c8102e; font: 12px/17px "Open Sans", sans-serif; text-align: center; }
.badge.dot { top: 5px; border: 5px solid #ed5050; background: #fff; }
.tray { position: absolute; right: 19px; top: 9px; display: flex; align-items: center; gap: 10px; }
.tray svg { width: 20px; height: 20px; }
.tray .sync { width: 22px; height: 22px; margin: 0 10px 0 8px; }
time { width: 80px; text-align: right; font-size: 15px; line-height: 21px; }
```
